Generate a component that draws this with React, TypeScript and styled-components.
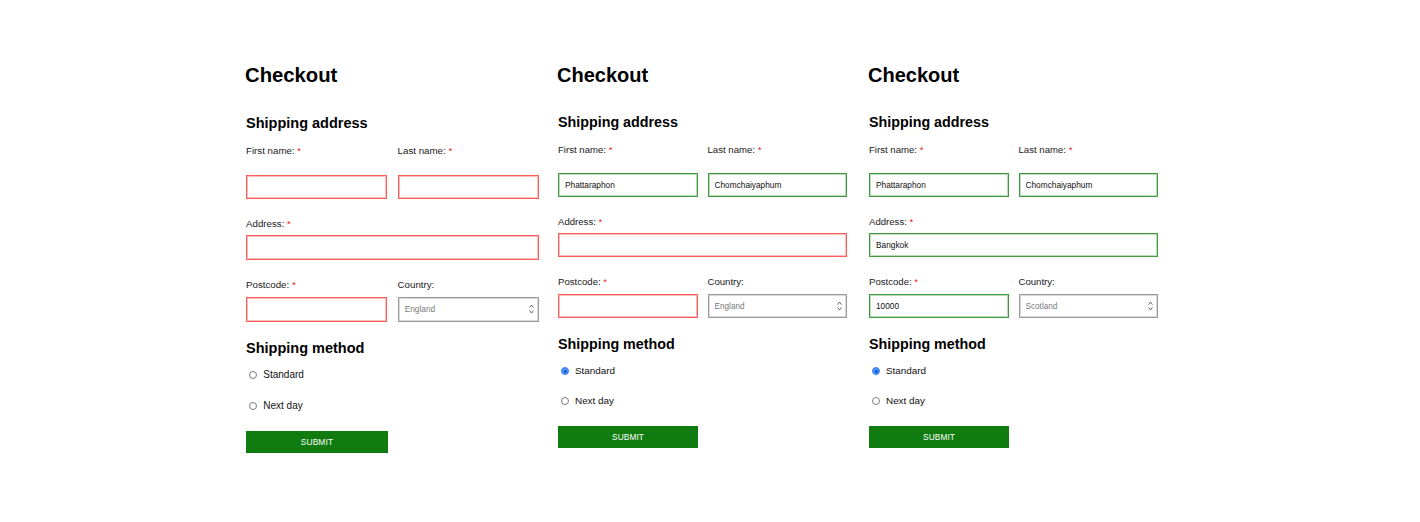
import React from "react";
import styled, { createGlobalStyle } from "styled-components";

const Global = createGlobalStyle`
  html, body { margin: 0; padding: 0; background: #fff; }
  body { font-family: "Liberation Sans", Arial, Helvetica, sans-serif; color: #111; }
  * { box-sizing: border-box; }
`;

const Page = styled.div`
  display: flex;
  align-items: flex-start;
  padding-left: 246px;
  width: 1420px;
  height: 522px;
`;

const Slot = styled.div<{ $w: number; $top: number }>`
  flex: 0 0 ${(p) => p.$w}px;
  padding-top: ${(p) => p.$top}px;
`;

const Form = styled.form<{ $zoom: number }>`
  width: 289px;
  zoom: ${(p) => p.$zoom};
  display: flex;
  flex-direction: column;
`;

const Title = styled.h1`
  margin: 0 0 0 -1px;
  font-size: 20px;
  line-height: 24px;
  font-weight: 700;
  color: #000;
`;

const Section = styled.h2<{ $mt: number }>`
  margin: ${(p) => p.$mt}px 0 0 0;
  font-size: 14.3px;
  line-height: 18px;
  font-weight: 700;
  color: #000;
`;

const Row = styled.div<{ $mt: number; $cols?: number }>`
  display: grid;
  grid-template-columns: repeat(${(p) => p.$cols ?? 2}, 1fr);
  column-gap: 10px;
  margin-top: ${(p) => p.$mt}px;
`;

const Field = styled.div`
  display: flex;
  flex-direction: column;
`;

const Label = styled.label<{ $gap: number }>`
  font-size: 9.6px;
  line-height: 12px;
  color: #1a1a1a;
  margin-bottom: ${(p) => p.$gap}px;
`;

const Star = styled.span`
  color: #e31b1b;
`;

type Status = "error" | "ok" | "neutral";

const borderFor = (s: Status) =>
  s === "error" ? "#ff5c5c" : s === "ok" ? "#3f9a3f" : "#9a9a9a";
const haloFor = (s: Status) =>
  s === "error" ? "rgba(255,92,92,0.4)" : s === "ok" ? "rgba(63,154,63,0.35)" : "rgba(150,150,150,0.35)";

const Input = styled.input<{ $status: Status }>`
  height: 24px;
  width: 100%;
  border: 1px solid ${(p) => borderFor(p.$status)};
  box-shadow: inset 0 0 0 1px ${(p) => haloFor(p.$status)};
  border-radius: 0;
  padding: 0 0 0 6px;
  font-family: "Liberation Sans", Arial, sans-serif;
  font-size: 8.3px;
  color: #111;
  background: #fff;
  outline: none;
`;

const SelectWrap = styled.div`
  position: relative;
  height: 24px;
`;

const Select = styled.select`
  appearance: none;
  -webkit-appearance: none;
  width: 100%;
  height: 24px;
  border: 1px solid #9a9a9a;
  box-shadow: inset 0 0 0 1px rgba(150, 150, 150, 0.35);
  border-radius: 0;
  padding: 0 0 0 6px;
  font-family: "Liberation Sans", Arial, sans-serif;
  font-size: 8.2px;
  color: #7a7a7a;
  background: #fff;
  outline: none;
`;

const Chevrons = styled.svg`
  position: absolute;
  right: 5px;
  top: 7px;
  pointer-events: none;
`;

const Radios = styled.div`
  display: flex;
  flex-direction: column;
  gap: 18px;
  margin-top: 12px;
`;

const RadioRow = styled.label`
  display: flex;
  align-items: center;
  gap: 6px;
  padding-left: 3px;
  font-size: 9.9px;
  line-height: 12px;
  color: #111;
`;

const RadioDot = styled.span<{ $on: boolean }>`
  position: relative;
  width: 8px;
  height: 8px;
  border-radius: 50%;
  border: 1px solid ${(p) => (p.$on ? "#3b86f7" : "#7d7d7d")};
  background: ${(p) => (p.$on ? "#4b93fb" : "#fff")};
  &::after {
    content: "";
    display: ${(p) => (p.$on ? "block" : "none")};
    position: absolute;
    left: 1.5px;
    top: 1.5px;
    width: 3px;
    height: 3px;
    border-radius: 50%;
    background: #1456c9;
  }
`;

const Submit = styled.button`
  margin-top: 19px;
  width: 140px;
  height: 22px;
  border: none;
  background: #107c10;
  color: #fff;
  font-family: "Liberation Sans", Arial, sans-serif;
  font-size: 8.3px;
  letter-spacing: 0.1px;
  cursor: pointer;
`;

type FormData = {
  first: string;
  last: string;
  address: string;
  postcode: string;
  country: string;
  standard: boolean;
};

const st = (v: string): Status => (v ? "ok" : "error");

const Checkout: React.FC<{ d: FormData; zoom: number }> = ({ d, zoom }) => (
  <Form $zoom={zoom} onSubmit={(e) => e.preventDefault()}>
    <Title>Checkout</Title>
    <Section $mt={26}>Shipping address</Section>
    <Row $mt={13}>
      <Field>
        <Label $gap={17}>
          First name: <Star>*</Star>
        </Label>
        <Input $status={st(d.first)} defaultValue={d.first} />
      </Field>
      <Field>
        <Label $gap={17}>
          Last name: <Star>*</Star>
        </Label>
        <Input $status={st(d.last)} defaultValue={d.last} />
      </Field>
    </Row>
    <Row $mt={19} $cols={1}>
      <Field>
        <Label $gap={5}>
          Address: <Star>*</Star>
        </Label>
        <Input $status={st(d.address)} defaultValue={d.address} />
      </Field>
    </Row>
    <Row $mt={19}>
      <Field>
        <Label $gap={6}>
          Postcode: <Star>*</Star>
        </Label>
        <Input $status={st(d.postcode)} defaultValue={d.postcode} />
      </Field>
      <Field>
        <Label $gap={6}>Country:</Label>
        <SelectWrap>
          <Select defaultValue={d.country}>
            <option>England</option>
            <option>Scotland</option>
            <option>Wales</option>
          </Select>
          <Chevrons width="5" height="10" viewBox="0 0 5 10">
            <path d="M0.6 3.6 L2.5 1 L4.4 3.6 M0.6 6.4 L2.5 9 L4.4 6.4" fill="none" stroke="#555" strokeWidth="0.9" />
          </Chevrons>
        </SelectWrap>
      </Field>
    </Row>
    <Section $mt={17}>Shipping method</Section>
    <Radios>
      <RadioRow>
        <RadioDot $on={d.standard} />
        Standard
      </RadioRow>
      <RadioRow>
        <RadioDot $on={false} />
        Next day
      </RadioRow>
    </Radios>
    <Submit type="submit">SUBMIT</Submit>
  </Form>
);

const states: { d: FormData; w: number; top: number; zoom: number }[] = [
  { d: { first: "", last: "", address: "", postcode: "", country: "England", standard: false }, w: 312, top: 63, zoom: 1.014 },
  { d: { first: "Phattaraphon", last: "Chomchaiyaphum", address: "", postcode: "", country: "England", standard: true }, w: 311, top: 63, zoom: 1 },
  { d: { first: "Phattaraphon", last: "Chomchaiyaphum", address: "Bangkok", postcode: "10000", country: "Scotland", standard: true }, w: 311, top: 63, zoom: 1 },
];

export default function App() {
  return (
    <>
      <Global />
      <Page>
        {states.map((s, i) => (
          <Slot key={i} $w={s.w} $top={s.top}>
            <Checkout d={s.d} zoom={s.zoom} />
          </Slot>
        ))}
      </Page>
    </>
  );
}
